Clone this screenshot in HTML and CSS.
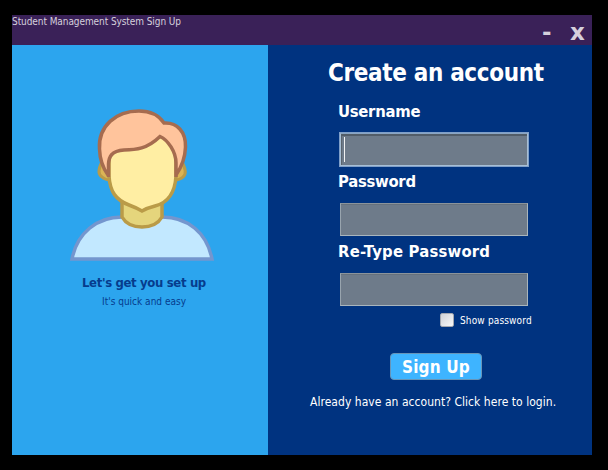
FILE: index.html
```html
<!DOCTYPE html>
<html lang="en">
<head>
<meta charset="utf-8">
<title>Student Management System Sign Up</title>
<link rel="stylesheet" href="styles.css">
</head>
<body>
<div class="window">
  <header class="titlebar">
    <span class="caption">Student Management System Sign Up</span>
    <div class="controls"><span class="minimize">-</span><span class="close">x</span></div>
  </header>
  <main class="content">
    <section class="welcome">
      <svg class="avatar" viewBox="0 0 165 175" width="165" height="175">
        <path d="M12 164C17 138 37 122 62 122H102C128 122 147 138 152 164Z" fill="#c2e8ff" stroke="#7496ce" stroke-width="3.5"/>
        <path d="M62 102H102V122C98 129 92 132 82 132C72 132 66 129 62 122Z" fill="#e5d57c" stroke="#ba9b48" stroke-width="3.5"/>
        <path d="M42 67Q36 78 42 82Q45 85 51 85V67ZM122 67Q128 78 123 82Q120 85 114 85V67Z" fill="#dbb456" stroke="#ba9b48" stroke-width="3"/>
        <path d="M49 60L60 48H83L102 36L116 56V81C115 98 107 108 95 111Q87 113 82 116Q77 113 69 110C56 105 50 97 49 81Z" fill="#ffeea3" stroke="#ba9b48" stroke-width="3.5"/>
        <path d="M48 81Q40 69 39.500 54C38 31 56 16 79 16Q96 16 104 28C117 27 126 37 125.500 52Q125 67 116 81V68C116 57 108 45 100 41.500C87 54 76 55 64 55C51 56 49 62 48.500 69Z" fill="#ffc49c"/>
        <path d="M48.500 82V69C49 62 51 56 64 55C76 55 87 54 100 41.500C108 45 116 57 116 68V82M48 80Q40 69 39.500 54C38 31 56 16 79 16Q96 16 104 28C117 27 126 37 125.500 52Q125 67 116 80" fill="none" stroke="#a66c4f" stroke-width="3.500"/>
      </svg>
      <h2><span>Let's get you set up</span></h2>
      <p><span>It's quick and easy</span></p>
    </section>
    <form class="signup">
      <h1><span>Create an account</span></h1>
      <div class="field"><label><span class="username">Username</span></label><div class="input focused"><i class="caret"></i></div></div>
      <div class="field"><label><span class="password">Password</span></label><div class="input"></div></div>
      <div class="field"><label><span class="retype">Re-Type Password</span></label><div class="input"></div></div>
      <div class="show"><i class="checkbox"></i><span>Show password</span></div>
      <div class="submit"><span>Sign Up</span></div>
      <p class="login"><span>Already have an account? Click here to login.</span></p>
    </form>
  </main>
</div>
</body>
</html>
```
FILE: styles.css
```css
* { box-sizing: border-box; margin: 0; padding: 0; }
body {
  width: 608px; height: 470px; overflow: hidden;
  background: #000; color: #fff; padding: 15px 16px 15px 12px;
  font-family: "DejaVu Sans Condensed", "DejaVu Sans", sans-serif;
  font-stretch: condensed; white-space: nowrap;
}
.window { height: 440px; }
.titlebar {
  display: flex; justify-content: space-between;
  height: 30px; background: #3a2158; color: #d5d0dc;
}
.caption { font-size: 10px; line-height: 14px; letter-spacing: -0.08px; }
.controls { display: flex; font-family: "DejaVu Sans", sans-serif; font-stretch: normal; font-weight: bold; font-size: 23px; line-height: 34px; padding-right: 6px; }
.minimize { width: 28px; }
.close { width: 16px; }
.content { display: flex; height: 410px; }
.welcome {
  width: 256px; background: #2ca5ee; color: #063c8d;
  padding: 50px 0 0 48px;
}
.avatar { display: block; }
.welcome h2 { width: 168px; font-size: 13px; line-height: 18px; letter-spacing: -0.35px; margin-top: 4px; padding-left: 22px; }
.welcome p { font-size: 10px; line-height: 14px; margin-top: 3px; padding-left: 42px; }
.signup { flex: 1; background: #003380; padding-top: 4px; }
h1 { font-size: 24px; line-height: 48px; letter-spacing: -0.35px; padding-left: 60px; }
.field { height: 70px; padding-left: 70px; }
label { display: block; font-size: 16.5px; font-weight: bold; line-height: 30px; }
.username, .password { letter-spacing: -0.28px; }
.retype { letter-spacing: 0.2px; }
.input {
  width: 188px; height: 33px; margin: 6px 0 0 2px; background: #6e7b8a;
  border: 1px solid #a9b5bd; border-top-color: #8b949b; border-left-color: #98a4ae;
  box-shadow: inset 0 1px #66717d;
}
.focused { border: 1px solid #a8bfd5; border-top-color: #8aa5c2; box-shadow: 0 0 0 1px #7f9fc9, inset 0 2px #525d68, inset 1px 0 #59636d; padding: 3px 0 0 3px; }
.caret { display: block; width: 1px; height: 25px; background: #f1f2f3; }
.show { display: flex; align-items: center; height: 20px; padding-left: 172px; font-size: 10px; letter-spacing: 0.15px; gap: 6px; margin-top: 3px; }
.checkbox { width: 14px; height: 14px; border: 1px solid #a4a8b0; border-radius: 2px; background: linear-gradient(135deg, #cfd2d8, #f8f8f8); }
.submit {
  width: 92px; height: 27px; margin: 23px 0 0 122px; padding-left: 11px;
  border: 1px solid #6795b8; border-radius: 4px; background: #3eb4ff;
  font-size: 17px; font-weight: bold; letter-spacing: 0.15px; line-height: 26px;
}
.login { font-size: 12px; line-height: 18px; letter-spacing: 0.04px; margin-top: 13px; padding-left: 42px; }
```
